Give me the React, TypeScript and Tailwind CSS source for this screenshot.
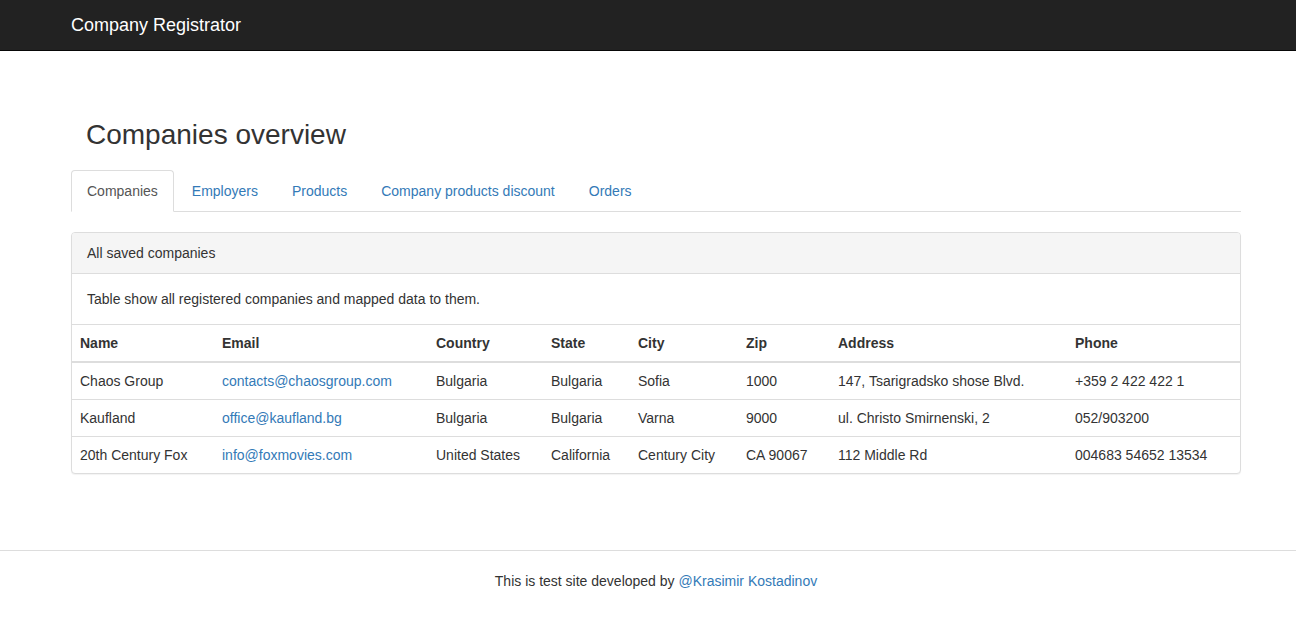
const companies = [
  {
    name: "Chaos Group",
    email: "contacts@chaosgroup.com",
    country: "Bulgaria",
    state: "Bulgaria",
    city: "Sofia",
    zip: "1000",
    address: "147, Tsarigradsko shose Blvd.",
    phone: "+359 2 422 422 1",
  },
  {
    name: "Kaufland",
    email: "office@kaufland.bg",
    country: "Bulgaria",
    state: "Bulgaria",
    city: "Varna",
    zip: "9000",
    address: "ul. Christo Smirnenski, 2",
    phone: "052/903200",
  },
  {
    name: "20th Century Fox",
    email: "info@foxmovies.com",
    country: "United States",
    state: "California",
    city: "Century City",
    zip: "CA 90067",
    address: "112 Middle Rd",
    phone: "004683 54652 13534",
  },
];

const tabs = ["Companies", "Employers", "Products", "Company products discount", "Orders"];

export default function App() {
  return (
    <div className="min-h-screen bg-white text-[14px] leading-[20px] text-[#333] font-['Liberation_Sans',Arial,sans-serif]">
      {/* navbar */}
      <nav className="h-[51px] border-b border-[#080808] bg-[#222]">
        <div className="ml-[71px] pt-[15px]">
          <span className="text-[18px] leading-[20px] text-white">Company Registrator</span>
        </div>
      </nav>

      <div className="ml-[71px] w-[1170px]">
        <h2 className="mt-[68px] pl-[15px] text-[28px] leading-[31px] font-normal">Companies overview</h2>

        <ul className="mt-[20px] flex border-b border-[#ddd]">
          {tabs.map((t, i) => (
            <li key={t} className="-mb-px mr-[2px]">
              {i === 0 ? (
                <span className="block rounded-t-[4px] border border-[#ddd] border-b-transparent bg-white px-[15px] py-[10px] text-[#555]">
                  {t}
                </span>
              ) : (
                <a href="#" className="block rounded-t-[4px] border border-transparent px-[15px] py-[10px] text-[#337ab7]">
                  {t}
                </a>
              )}
            </li>
          ))}
        </ul>

        <div className="mt-[20px] rounded-[4px] border border-[#ddd] bg-white shadow-[0_1px_1px_rgba(0,0,0,0.05)]">
          <div className="rounded-t-[3px] border-b border-[#ddd] bg-[#f5f5f5] px-[15px] py-[10px]">All saved companies</div>
          <div className="p-[15px]">Table show all registered companies and mapped data to them.</div>
          <table className="w-full table-fixed border-t border-[#ddd]">
            <colgroup>
              <col className="w-[142px]" />
              <col className="w-[214px]" />
              <col className="w-[115px]" />
              <col className="w-[87px]" />
              <col className="w-[108px]" />
              <col className="w-[92px]" />
              <col className="w-[237px]" />
              <col className="w-[173px]" />
            </colgroup>
            <thead>
              <tr className="border-b-2 border-[#ddd] text-left">
                {["Name", "Email", "Country", "State", "City", "Zip", "Address", "Phone"].map((h) => (
                  <th key={h} className="p-[8px] font-bold">
                    {h}
                  </th>
                ))}
              </tr>
            </thead>
            <tbody>
              {companies.map((c, i) => (
                <tr key={c.name} className={i > 0 ? "border-t border-[#ddd]" : ""}>
                  <td className="p-[8px]">{c.name}</td>
                  <td className="p-[8px]">
                    <a href="#" className="text-[#337ab7]">
                      {c.email}
                    </a>
                  </td>
                  <td className="p-[8px]">{c.country}</td>
                  <td className="p-[8px]">{c.state}</td>
                  <td className="p-[8px]">{c.city}</td>
                  <td className="p-[8px]">{c.zip}</td>
                  <td className="p-[8px]">{c.address}</td>
                  <td className="p-[8px]">{c.phone}</td>
                </tr>
              ))}
            </tbody>
          </table>
        </div>
      </div>

      {/* footer */}
      <footer className="mt-[76px] border-t border-[#ddd]">
        <div className="ml-[71px] w-[1170px] py-[20px] text-center">
          This is test site developed by{" "}
          <a href="#" className="text-[#337ab7]">
            @Krasimir Kostadinov
          </a>
        </div>
      </footer>
    </div>
  );
}
